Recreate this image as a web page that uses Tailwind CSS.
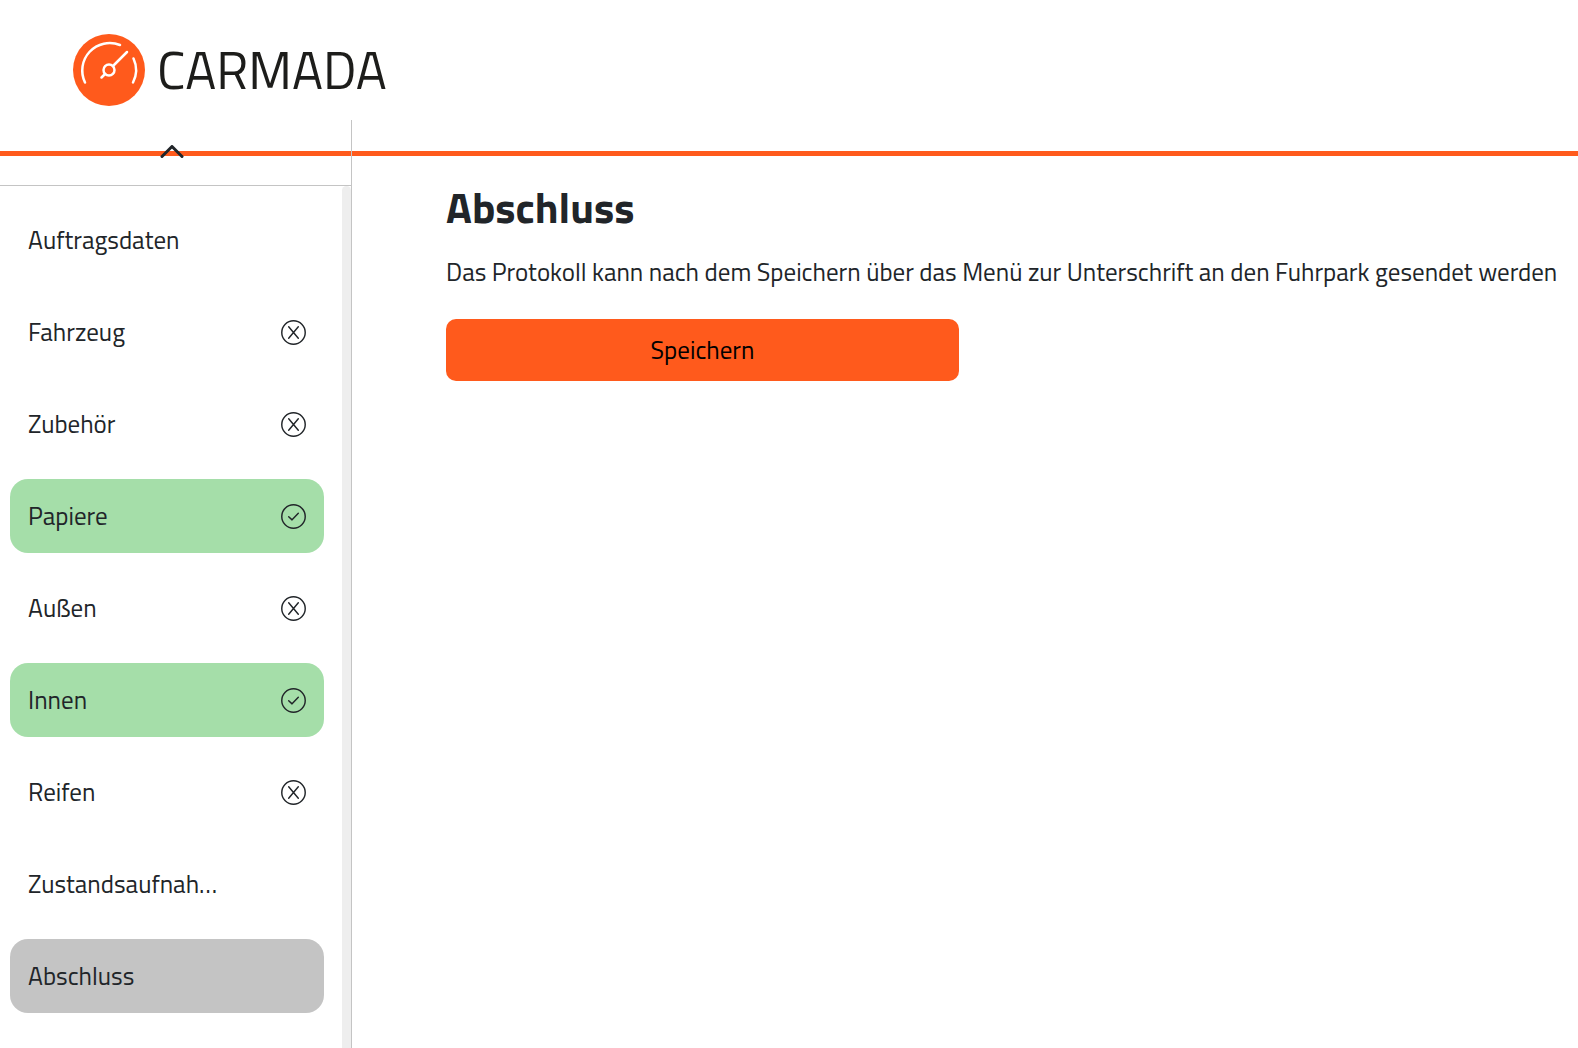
<!DOCTYPE html>
<html lang="de">
<head>
<meta charset="utf-8">
<meta name="viewport" content="width=device-width, initial-scale=1">
<title>Carmada – Abschluss</title>
<script src="https://cdn.jsdelivr.net/npm/@tailwindcss/browser@4"></script>
</head>
<body class="flex h-screen flex-col overflow-hidden bg-white font-['Titillium_Web',Lato,sans-serif] text-[25px] leading-9 text-[#212529]">
<svg class="hidden" aria-hidden="true">
  <symbol id="open" viewBox="0 0 26 26" fill="none" stroke="currentColor" stroke-width="1.5" stroke-linecap="round"><circle cx="13" cy="13" r="12.2"/><path d="M8 7 18 19M18 7 8 19"/></symbol>
  <symbol id="done" viewBox="0 0 26 26" fill="none" stroke="currentColor" stroke-width="1.5" stroke-linecap="round" stroke-linejoin="round"><circle cx="13" cy="13" r="12.2"/><path d="M8 13.200 11.500 16.500 18 9.700"/></symbol>
</svg>

<header class="h-[156px] shrink-0 border-b-5 border-[#ff5a1c] pt-[34px] pl-[73px]">
  <a href="#" class="inline-flex items-center gap-3 text-[52px] leading-[72px] text-[#1d1d1b]">
    <svg class="size-[72px]" viewBox="0 0 72 72" fill="none" stroke="#fff" stroke-width="2.500" stroke-linecap="round" aria-hidden="true">
      <circle cx="36" cy="36" r="36" fill="#ff5a1c" stroke="none"/>
      <path d="M12 48.500A27.500 27.500 0 0 1 47 11M60.500 24.500A27.500 27.500 0 0 1 60 48.500"/>
      <circle cx="36" cy="36" r="5.500"/>
      <path d="M40 32 54 18M32 40 28.500 43.500"/>
    </svg>
    <span>CARMADA</span>
  </a>
</header>

<div class="relative -mt-9 flex min-h-0 flex-1">
  <aside class="flex w-[352px] shrink-0 flex-col border-r border-[#c4c4c4]">
    <button type="button" class="flex h-[66px] shrink-0 items-center justify-center border-b border-[#c4c4c4] pr-2" aria-label="Menü einklappen">
      <svg class="h-4 w-6" viewBox="0 0 24 16" fill="none" stroke="currentColor" stroke-width="3" stroke-linecap="round" stroke-linejoin="round" aria-hidden="true"><path d="M2 11.500 12 1.500 22 11.500"/></svg>
    </button>
    <div class="flex min-h-0 flex-1">
      <nav class="flex flex-1 flex-col gap-[18px] overflow-hidden pt-[17px] pr-[18px] pl-[10px]">
        <a href="#" class="flex h-[74px] shrink-0 items-center justify-between rounded-[18px] px-[18px]"><span>Auftragsdaten</span></a>
        <a href="#" class="flex h-[74px] shrink-0 items-center justify-between rounded-[18px] px-[18px]"><span>Fahrzeug</span><svg class="size-[25px]"><use href="#open"/></svg></a>
        <a href="#" class="flex h-[74px] shrink-0 items-center justify-between rounded-[18px] px-[18px]"><span>Zubehör</span><svg class="size-[25px]"><use href="#open"/></svg></a>
        <a href="#" class="flex h-[74px] shrink-0 items-center justify-between rounded-[18px] bg-[#a5dea9] px-[18px]"><span>Papiere</span><svg class="size-[25px]"><use href="#done"/></svg></a>
        <a href="#" class="flex h-[74px] shrink-0 items-center justify-between rounded-[18px] px-[18px]"><span>Außen</span><svg class="size-[25px]"><use href="#open"/></svg></a>
        <a href="#" class="flex h-[74px] shrink-0 items-center justify-between rounded-[18px] bg-[#a5dea9] px-[18px]"><span>Innen</span><svg class="size-[25px]"><use href="#done"/></svg></a>
        <a href="#" class="flex h-[74px] shrink-0 items-center justify-between rounded-[18px] px-[18px]"><span>Reifen</span><svg class="size-[25px]"><use href="#open"/></svg></a>
        <a href="#" class="flex h-[74px] shrink-0 items-center justify-between rounded-[18px] px-[18px]"><span>Zustandsaufnah…</span></a>
        <a href="#" class="flex h-[74px] shrink-0 items-center justify-between rounded-[18px] bg-[#c4c4c4] px-[18px]" aria-current="page"><span>Abschluss</span></a>
      </nav>
      <div class="w-[9px] rounded-t-full bg-[#eee]"></div>
    </div>
  </aside>

  <main class="min-w-0 flex-1 pt-[60px] pl-[94px]">
    <h1 class="text-[43px] leading-[54px] font-bold">Abschluss</h1>
    <p class="mt-5 whitespace-nowrap">Das Protokoll kann nach dem Speichern über das Menü zur Unterschrift an den Fuhrpark gesendet werden</p>
    <button type="button" class="mt-[29px] h-[62px] w-[513px] rounded-[10px] bg-[#ff5a1c] text-black">Speichern</button>
  </main>
</div>
</body>
</html>
